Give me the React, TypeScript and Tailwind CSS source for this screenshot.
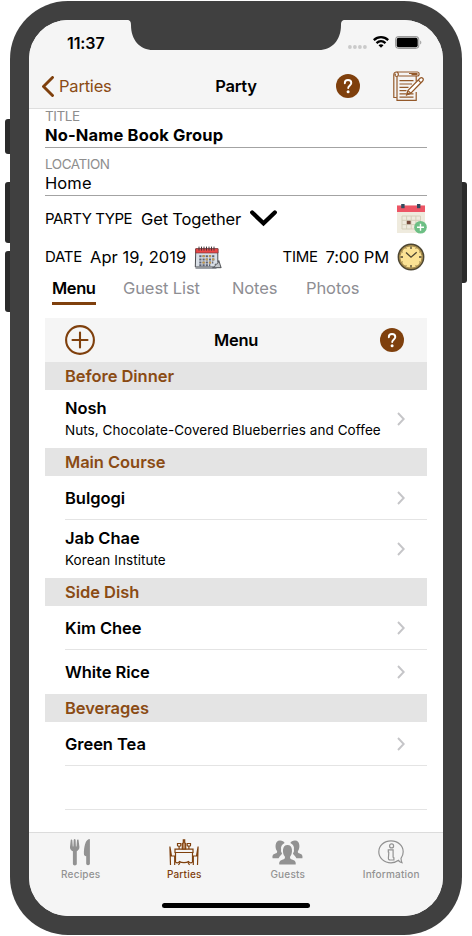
import React, { useState } from 'react';

type MenuItem = {
  name: string;
  detail?: string;
};

type Section = {
  title: string;
  items: MenuItem[];
};

const sections: Section[] = [
  {
    title: 'Before Dinner',
    items: [{ name: 'Nosh', detail: 'Nuts, Chocolate-Covered Blueberries and Coffee' }],
  },
  {
    title: 'Main Course',
    items: [{ name: 'Bulgogi' }, { name: 'Jab Chae', detail: 'Korean Institute' }],
  },
  {
    title: 'Side Dish',
    items: [{ name: 'Kim Chee' }, { name: 'White Rice' }],
  },
  {
    title: 'Beverages',
    items: [{ name: 'Green Tea' }],
  },
];

const tabs = [
  { name: 'Menu', width: 'w-[44px] mr-[27px]' },
  { name: 'Guest List', width: 'w-[77px] mr-[32px]' },
  { name: 'Notes', width: 'w-[46px] mr-[28px]' },
  { name: 'Photos', width: 'w-[54px]' },
];

const HelpIcon = () => (
  <svg width="24" height="24" viewBox="0 0 24 24" fill="none">
    <circle cx="12" cy="12" r="12" fill="#7f400d" />
    <path
      d="M8.8 9.2C8.8 7.2 10.2 6 12 6s3.3 1.2 3.3 3c0 2.3-3.1 2.6-3.1 5.1"
      stroke="#fff"
      strokeWidth="1.9"
      strokeLinecap="round"
    />
    <circle cx="12.1" cy="17.8" r="1.5" fill="#fff" />
  </svg>
);

const NotesIcon = () => (
  <svg width="31" height="31" viewBox="0 0 31 31" fill="none" stroke="#94592a" strokeWidth="1.2">
    <path d="M3.5 1H24.5c2.2 0 2.2 4 0 4H5.5" />
    <path d="M3.5 1C1.5 1 .8 2.2.8 4v22.5h3" />
    <path d="M3.5 1c2.2 0 2.6 4.5.3 4.5S1.6 3 3 3" />
    <path d="M4 5.5V29.3H23.2V21" />
    <path d="M23.2 5v5.5" />
    <path d="M16 2.5h8.5M18.5 3.7h6" />
    <path d="M6.5 9.7h14M6.5 13h12.5M6.5 16.3h9M6.5 19.6h7M6.5 22.9h6.5M6.5 26.2h14M16 22.9h4.5" />
    <path d="M13.7 23.8l1.2-4.2L27 7.3c2-1.6 4.3.6 2.7 2.7L17.8 22.2z" fill="#fff" />
    <path d="M25.2 9l2.8 2.8M15 19.6l2.8 2.6" />
    <path d="M13.7 23.8l.7-2.4 1.5 1.6z" fill="#7f400d" />
  </svg>
);

const CalendarAddIcon = () => (
  <svg width="30" height="30" viewBox="0 0 30 30" fill="none">
    <rect x="0" y="1.5" width="28" height="27.5" fill="#efebde" />
    <rect x="0" y="1.5" width="28" height="6.5" fill="#ed5565" />
    <rect x="4.2" y="0" width="3.4" height="4.2" fill="#324a5e" />
    <rect x="20" y="0" width="3.4" height="4.2" fill="#324a5e" />
    <path
      d="M5 12h18.5v13H5zM9.6 12v13M14.2 12v13M18.9 12v13M5 16.3h18.5M5 20.6h18.5"
      stroke="#d5d0bb"
      strokeWidth="1"
    />
    <rect x="9.9" y="16.8" width="3.8" height="3.4" fill="#75493a" />
    <circle cx="23.5" cy="23.3" r="6.3" fill="#6cbf84" />
    <path d="M23.5 19.8v7M20 23.3h7" stroke="#fff" strokeWidth="1.4" />
  </svg>
);

const CalendarIcon = () => (
  <svg width="28" height="24" viewBox="0 0 28 24" fill="none">
    <path d="M1.8 3h22v13l3 5.5-7-.5H1.3z" fill="#d9dfe6" stroke="#4a4c50" strokeWidth="1" />
    <path d="M1.7 2.6h22.4V7H1.7z" fill="#e94747" stroke="#6d3033" strokeWidth=".6" />
    <path
      d="M5 .6v4M7.5 .6v4M10 .6v4M12.5 .6v4M15 .6v4M17.5 .6v4M20 .6v4"
      stroke="#44363a"
      strokeWidth="1"
    />
    <path
      d="M5.3 10.2h16M5.3 13.4h16M5.3 16.6h14M5.3 19.3h11"
      stroke="#5c6172"
      strokeWidth="2"
      strokeDasharray="2.2 1"
    />
    <path
      d="M8.5 10.2h2.2M11.7 13.4h2.2M14.9 10.2h2.2M18.1 13.4h2.2M8.5 16.6h2.2M14.9 16.6h2.2"
      stroke="#c99a45"
      strokeWidth="1.8"
    />
    <path
      d="M24.8 14.5l2.3 7.2H18.5c2.5-.5 3-1.7 2.7-3.5 2 .3 3.3-.8 3.6-3.7z"
      fill="#c3c7cb"
      stroke="#4a4c50"
      strokeWidth=".9"
    />
    <path d="M1.5 22.2h21" stroke="#737780" strokeWidth="1" />
  </svg>
);

const ClockIcon = () => (
  <svg width="28" height="28" viewBox="0 0 28 28" fill="none">
    <circle cx="14" cy="14" r="12.3" fill="#fbe294" stroke="#4d4632" strokeWidth="2.2" />
    <circle cx="14" cy="14" r="11.3" stroke="#a88d4d" strokeWidth="1.4" />
    <path d="M14 3.5v2.5M14 22v2.5M3.5 14H6M22 14h2.5" stroke="#4d4632" strokeWidth="1.3" />
    <path
      d="M8.7 4.9l.6 1M19.3 4.9l-.6 1M4.9 8.7l1 .6M23.1 8.7l-1 .6M4.9 19.3l1-.6M23.1 19.3l-1-.6M8.7 23.1l.6-1M19.3 23.1l-.6-1"
      stroke="#8b7846"
      strokeWidth=".9"
    />
    <path d="M9 9.5l5 4.7 5.7-4.9" stroke="#4d4632" strokeWidth="1.3" />
  </svg>
);

const RecipesIcon = () => (
  <svg width="21" height="27" viewBox="0 0 21 27" fill="#929292">
    <path d="M.8.7c.8-.6 1.4-.3 1.5.6l.5 6.2h.6L3.7 1c.2-1.2 1.7-1.2 1.9 0l.3 6.5h.6L7 1.3C7.1.4 7.9.2 8.5.8l.9 7c.2 2-.9 3.6-2.6 4.4v12.6c0 2.1-3.9 2.1-3.9 0V12.2C1 11.4-.2 9.8 0 7.8z" />
    <path d="M19.9.6v24.2c0 1.9-3.7 1.9-3.7 0v-7.5c-1.5-.3-2.3-1.2-2.3-2.6C13.9 8 15.3 1.3 18.6.2c.8-.3 1.3-.1 1.3.4z" />
  </svg>
);

const PartiesIcon = () => (
  <svg width="30" height="28" viewBox="0 0 30 28" fill="none" stroke="#7f400d" strokeWidth="1.2">
    <path d="M.9 7.5l1.6 9.5M.9 7.5l.6 18.5M1.5 17h4.2v9" />
    <path d="M29.1 7.5L27.5 17M29.1 7.5L28.5 26M28.5 17h-4.2v9" />
    <path d="M6 10.2h18v3.3H6z" />
    <path d="M6.5 13.5v9.8M23.5 13.5v9.8M6.5 23.3c1.5 1 3 .5 4-.8 2 1.6 7 1.6 9 0 1 1.3 2.5 1.8 4 .8M11 23.5L9.5 26M19 23.5l1.5 2.5" />
    <path d="M13.3 10V5l1-1.5V.8h1.4v2.7l1 1.5v5z" fill="#b98a63" />
    <path d="M8.5 4.5h3.3v2c0 1-3.3 1-3.3 0zM10.1 7.3V10M18.2 4.5h3.3v2c0 1-3.3 1-3.3 0zM19.9 7.3V10" />
  </svg>
);

const GuestsIcon = () => (
  <svg width="31" height="25" viewBox="0 0 31 25" fill="#929292">
    <path d="M.6 18.2c-.6-3.2.8-4 3.6-4.9 1.2-.4 1.2-1.7.5-2.7C3 8 2.6.4 8 .4c2.4 0 4.1 1.1 4.6 2.6-2.8 1.3-4 3.6-3.5 6.8-.3 1.5.1 2.6 1 3.4-.5 1.7-2.5 2.5-3.5 5z" />
    <path d="M30.4 18.2c.6-3.2-.8-4-3.6-4.9-1.2-.4-1.2-1.7-.5-2.7C28 8 28.4.4 23 .4c-2.4 0-4.1 1.1-4.6 2.6 2.8 1.3 4 3.6 3.5 6.8.3 1.5-.1 2.6-1 3.4.5 1.7 2.5 2.5 3.5 5z" />
    <path d="M7.3 24.4c-.5-3.6 1.8-4.3 4.6-5.2 1.4-.5 1.3-2.1.6-3.1-2.2-2.9-2.7-11.2 3-11.2s5.2 8.3 3 11.2c-.7 1-.8 2.6.6 3.1 2.8.9 5.1 1.6 4.6 5.2z" />
  </svg>
);

const InformationIcon = () => (
  <svg width="26" height="24" viewBox="0 0 26 24" fill="none" stroke="#929292" strokeWidth="1.2">
    <path d="M20.5 20.3C18.3 22 15.8 22.9 13 22.9 6.2 22.9.8 18 .8 11.8S6.2.8 13 .8s12.2 4.8 12.2 11c0 2.5-.8 4.7-2.2 6.5.1 1.7.4 3.1 1 4.4-1.4-.3-2.6-1.1-3.5-2.4z" />
    <circle cx="13.6" cy="5.9" r="2" />
    <path d="M10.3 9.8h4.8v7.2c0 .6.2.8.8.8v2.2h-3.7c-1.3 0-1.9-.7-1.8-1.9l.4-5.7c0-.5-.1-.6-.5-.6z" />
  </svg>
);

const Chevron = () => (
  <svg width="8" height="14" viewBox="0 0 8 14" fill="none">
    <path d="M1 1l5.7 6L1 13" stroke="#c5c5c8" strokeWidth="1.9" />
  </svg>
);

const StatusBar = () => (
  <div className="flex h-11 items-center justify-between pl-[38px] pr-[21px] pt-[3px]">
    <span className="mb-[2px] text-[16px] font-semibold tracking-[-0.1px]">11:37</span>
    <div className="flex items-center">
      <svg className="mt-[6px]" width="19" height="4" viewBox="0 0 19 4" fill="#cacaca">
        <circle cx="1.9" cy="2" r="1.9" />
        <circle cx="6.9" cy="2" r="1.9" />
        <circle cx="11.9" cy="2" r="1.9" />
        <circle cx="16.9" cy="2" r="1.9" />
      </svg>
      <svg className="ml-[6px] mb-[3px]" width="16" height="12" viewBox="0 0 16 12" fill="none" stroke="#000" strokeWidth="2.3">
        <path d="M.8 4.2c4.2-4 10.2-4 14.4 0M3.5 7.1c2.7-2.5 6.3-2.5 9 0" />
        <path d="M5.5 9.3c1.5-1.3 3.5-1.3 5 0L8 11.8z" fill="#000" stroke="none" />
      </svg>
      <svg className="ml-[6px] mb-[3px]" width="27" height="13" viewBox="0 0 27 13" fill="none">
        <rect x=".6" y=".6" width="23.2" height="11.8" rx="3.3" stroke="#9b9b9b" strokeWidth="1.1" />
        <rect x="1.7" y="1.8" width="21" height="9.4" rx="1.9" fill="#000" />
        <path d="M25.2 4.5c1.5.7 1.5 3.3 0 4z" fill="#9b9b9b" />
      </svg>
    </div>
  </div>
);

const NavBar = () => (
  <div className="grid h-[45px] grid-cols-3 items-center border-b border-[#dedede] pl-[13px] pr-[19px]">
    <button className="flex items-center text-[#8a4b14]">
      <svg width="12" height="21" viewBox="0 0 12 21" fill="none">
        <path d="M10.5 1.5l-9 9 9 9" stroke="#7f400d" strokeWidth="2.9" strokeLinecap="round" />
      </svg>
      <span className="ml-[5px] text-[16.5px] tracking-[-0.2px]">Parties</span>
    </button>
    <span className="pl-[6px] text-center text-[16.5px] font-semibold tracking-[-0.25px]">Party</span>
    <div className="flex items-center justify-end">
      <HelpIcon />
      <span className="ml-[33px]">
        <NotesIcon />
      </span>
    </div>
  </div>
);

const PartyForm = () => (
  <div className="text-[16.5px] tracking-[-0.2px]">
    <div className="h-[39px] border-b border-[#a3a3a3] leading-[19px]">
      <div className="h-[17px] text-[13.5px] leading-[14px] tracking-[-0.4px] text-[#8e8e8e]">TITLE</div>
      <div className="font-bold tracking-[0.15px]">No-Name Book Group</div>
    </div>
    <div className="h-[48px] border-b border-[#a3a3a3] pt-[8px] leading-[19px]">
      <div className="h-[18px] text-[13.5px] leading-[16px] tracking-[-0.45px] text-[#8e8e8e]">LOCATION</div>
      <div className="tracking-[0.1px]">Home</div>
    </div>
    <div className="flex h-[46px] items-center">
      <span className="w-[96px] text-[15px] tracking-[-0.45px]">PARTY TYPE</span>
      <span className="tracking-[-0.15px]">Get Together</span>
      <svg className="ml-[9px] mb-px" width="27" height="17" viewBox="0 0 27 17" fill="none">
        <path d="M2.2 2.5L13.5 13.3 24.8 2.5" stroke="#000" strokeWidth="4.2" strokeLinecap="round" />
      </svg>
      <span className="ml-auto">
        <CalendarAddIcon />
      </span>
    </div>
    <div className="flex h-[31px] items-center pr-[2px]">
      <span className="w-[45px] text-[15px] tracking-[-0.3px]">DATE</span>
      <span className="tracking-[0.05px]">Apr 19, 2019</span>
      <span className="ml-[8px]">
        <CalendarIcon />
      </span>
      <span className="ml-auto text-[15px] tracking-[-0.3px]">TIME</span>
      <span className="ml-[8px] mr-[8px] tracking-[-0.15px]">7:00 PM</span>
      <span className="mb-[2px]">
        <ClockIcon />
      </span>
    </div>
  </div>
);

const BottomBar = () => (
  <div className="mt-auto flex h-[84px] flex-col border-t border-[#dcdcdc] bg-[#f5f5f5] text-[10px] font-medium tracking-[0.2px] text-[#929292]">
    <div className="grid grid-cols-4">
      <div className="flex flex-col items-center">
        <div className="flex h-[34px] items-end pb-px">
          <RecipesIcon />
        </div>
        <span className="leading-[14px]">Recipes</span>
      </div>
      <div className="flex flex-col items-center text-[#7f400d]">
        <div className="flex h-[34px] items-end">
          <PartiesIcon />
        </div>
        <span className="leading-[14px]">Parties</span>
      </div>
      <div className="flex flex-col items-center">
        <div className="flex h-[34px] items-end pb-[2px]">
          <GuestsIcon />
        </div>
        <span className="leading-[14px]">Guests</span>
      </div>
      <div className="flex flex-col items-center">
        <div className="flex h-[34px] items-end pb-[3px]">
          <InformationIcon />
        </div>
        <span className="leading-[14px]">Information</span>
      </div>
    </div>
    <div className="mx-auto mt-auto mb-[8px] h-[5px] w-[148px] rounded-full bg-black" />
  </div>
);

const App = () => {
  const [activeTab, setActiveTab] = useState('Menu');

  return (
    <div className="h-[936px] w-[472px] bg-white pl-[10px] pt-px font-['Inter',sans-serif] text-black">
      <div className="relative h-[934px] w-[452px]">
        {/* Side buttons */}
        <div className="absolute -left-[5px] top-[118px] h-[35px] w-3 rounded-[3px] bg-[#2b2b2b]" />
        <div className="absolute -left-[5px] top-[181px] h-[61px] w-3 rounded-[3px] bg-[#2b2b2b]" />
        <div className="absolute -left-[5px] top-[250px] h-[61px] w-3 rounded-[3px] bg-[#2b2b2b]" />
        <div className="absolute -right-[5px] top-[181px] h-[101px] w-3 rounded-[3px] bg-[#2b2b2b]" />

        {/* Phone body */}
        <div className="relative h-full rounded-[58px] bg-[#404040] p-[19px]">
          <svg className="absolute left-[117px] top-[18px] z-10" width="218" height="32" viewBox="0 0 218 32" fill="#404040">
            <path d="M0 0V1c3 0 4 1.5 4 5 0 15 9 25 22 25H192c13 0 22-10 22-25 0-3.5 1-5 4-5V0z" />
          </svg>

          <div className="flex h-full flex-col overflow-hidden rounded-[39px] bg-white">
            <div className="bg-[#f5f5f5]">
              <StatusBar />
              <NavBar />
            </div>

            <div className="px-4">
              <PartyForm />

              <div className="flex h-[32px] pl-[7px] text-[16.5px] tracking-[-0.1px]">
                {tabs.map((tab) => (
                  <button
                    key={tab.name}
                    onClick={() => setActiveTab(tab.name)}
                    className={`h-[32px] whitespace-nowrap border-b-[3px] pt-[2px] text-left leading-[27px] ${tab.width} ${
                      activeTab === tab.name
                        ? 'border-[#7f400d] font-semibold tracking-[-0.4px] text-black'
                        : 'border-transparent text-[#8e8e93]'
                    }`}
                  >
                    {tab.name}
                  </button>
                ))}
              </div>

              <div className="mt-[13px]">
                <div className="grid h-11 grid-cols-3 items-center bg-[#f5f5f5] px-5">
                  <svg width="30" height="30" viewBox="0 0 30 30" fill="none" stroke="#7f400d" strokeWidth="2.1">
                    <circle cx="15" cy="15" r="13.9" />
                    <path d="M15 7.5v15M7.5 15h15" strokeLinecap="round" />
                  </svg>
                  <span className="text-center text-[16.5px] font-semibold tracking-[-0.35px]">Menu</span>
                  <span className="justify-self-end pr-[3px]">
                    <HelpIcon />
                  </span>
                </div>

                {sections.map((section) => (
                  <div key={section.title}>
                    <div className="flex h-7 items-center bg-[#e4e4e4] pl-5 pt-px text-[16.5px] font-semibold tracking-[-0.05px] text-[#8a4b14]">
                      {section.title}
                    </div>
                    {section.items.map((item, idx) => (
                      <div key={item.name} className={`flex pl-5 ${item.detail ? 'h-[58px]' : 'h-11'}`}>
                        <div
                          className={`flex flex-1 items-center justify-between pr-[22px] ${
                            idx < section.items.length - 1 || section.title === 'Beverages'
                              ? 'border-b border-[#e4e4e4]'
                              : ''
                          }`}
                        >
                          <div>
                            <div
                              className={`text-[16.5px] font-semibold tracking-[-0.05px] ${
                                item.detail ? 'leading-[21px]' : 'leading-[22px]'
                              }`}
                            >
                              {item.name}
                            </div>
                            {item.detail && (
                              <div className="h-[21px] whitespace-nowrap text-[13.5px] leading-[23px] tracking-[0.06px]">
                                {item.detail}
                              </div>
                            )}
                          </div>
                          <Chevron />
                        </div>
                      </div>
                    ))}
                  </div>
                ))}
                <div className="ml-5 h-11 border-b border-[#e4e4e4]" />
              </div>
            </div>

            <BottomBar />
          </div>
        </div>
      </div>
    </div>
  );
};

export default App;
